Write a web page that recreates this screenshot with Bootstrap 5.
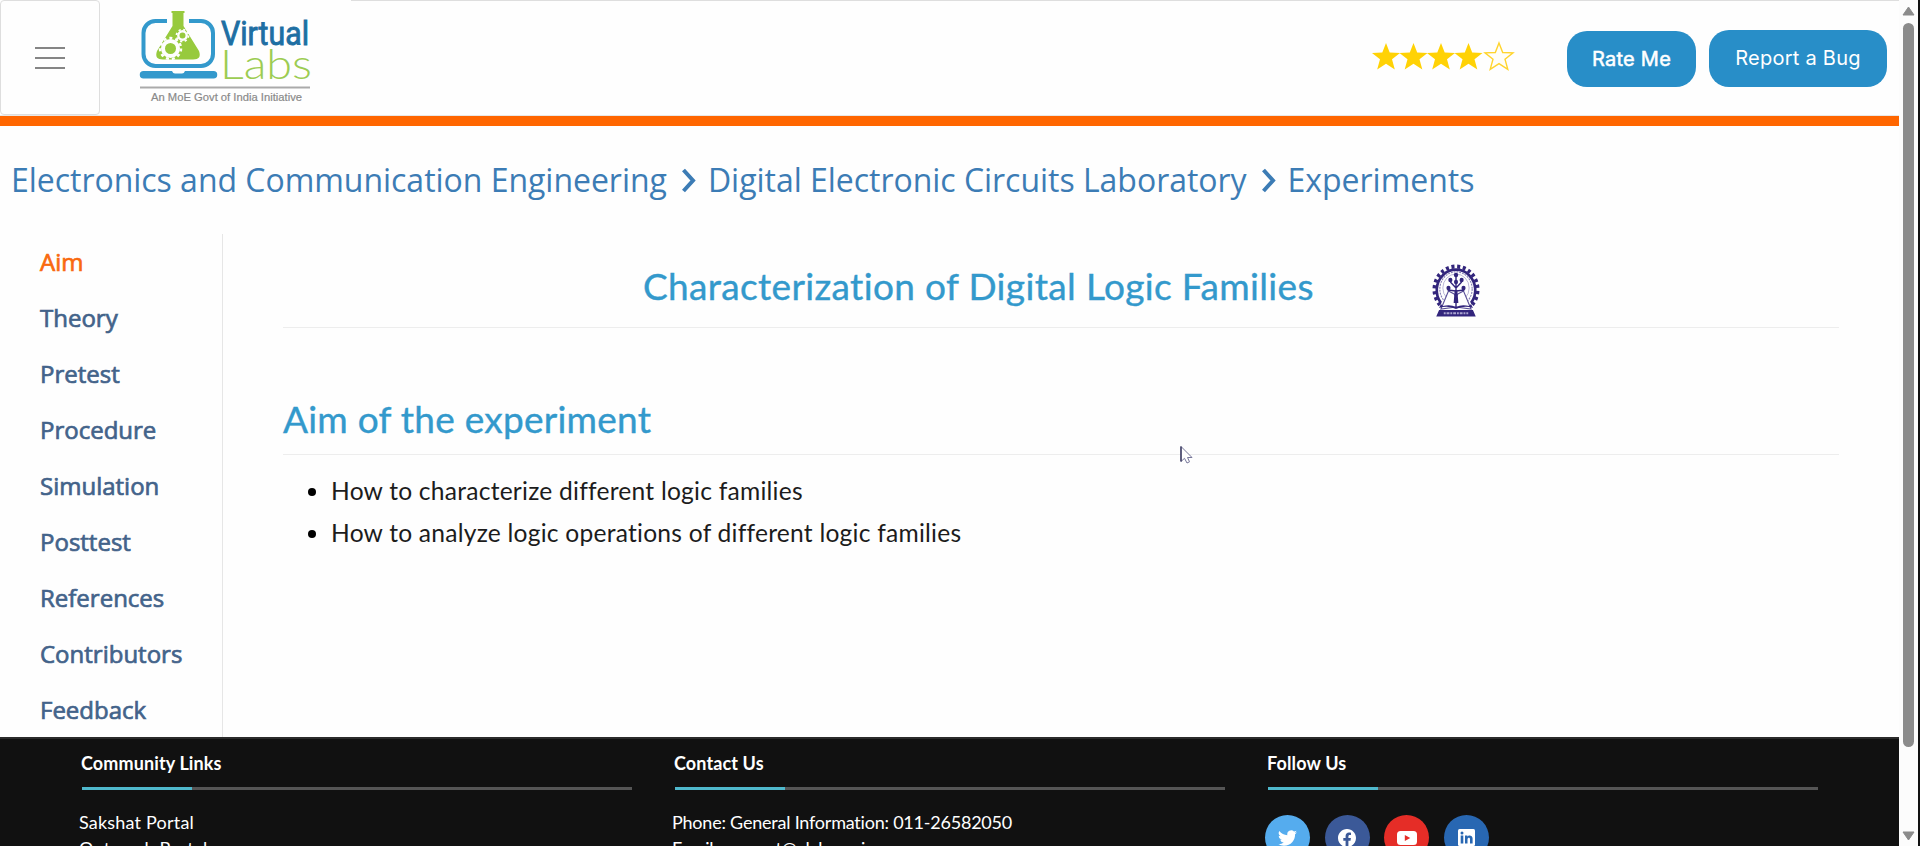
<!DOCTYPE html>
<html lang="en">
<head>
<meta charset="utf-8">
<meta name="viewport" content="width=device-width, initial-scale=1">
<title>Characterization of Digital Logic Families - Virtual Labs</title>
<link href="https://cdn.jsdelivr.net/npm/bootstrap@5.3.0/dist/css/bootstrap.min.css" rel="stylesheet">
<script src="https://cdn.jsdelivr.net/npm/bootstrap@5.3.0/dist/js/bootstrap.bundle.min.js"></script>
<style>
html,body{height:100%;overflow:hidden}
body{background:#fefefe;color:#1c1c1c;font-family:Lato,"Liberation Sans",sans-serif}
.app{height:846px}
.page-main{width:1899px;overflow:hidden}
.top-bar{height:116px;border-bottom:1px solid #e8e8e8}
.menu-btn{width:100px;height:115px;border:1px solid #dedede;border-radius:4px;background:none}
.brand-area{width:251px;padding:8px 0 0 38px}
.top-right{border-top:1px solid #dedede;padding-right:12px}
.stars{margin:0 52px 3px 0}
.pill{background:#288ec8;color:#fff;border-radius:20px;height:57px;font:400 20px/1 Inter,sans-serif;letter-spacing:.25px}
.pill.rate{width:129px;height:56px;margin:1px 13px 0 0;-webkit-text-stroke:.5px #fff}
.pill.bug{width:178px}
.stripe{height:10px;background:#f60}
.crumbs{height:108px;padding:0 0 1px 11px;font:32px/1 "Open Sans",sans-serif;letter-spacing:-.03px;color:#3c7cb5}
.crumbs a{color:inherit;text-decoration:none;white-space:nowrap}
.crumbs svg{width:16px;height:27px;margin:1px 11px 0 14px}
.mid{height:503px}
.side-col{width:223px;border-right:1px solid #e6e6e6}
.side-col a{font:24px/56px "Open Sans",sans-serif;color:#43638a;-webkit-text-stroke:.7px;text-decoration:none;padding-left:40px;height:56px}
.side-col a.on{color:#f9690e}
.content{padding:0 60px}
.ttl{font-size:37px;line-height:40px;letter-spacing:.35px;color:#39c;font-weight:400;-webkit-text-stroke:.4px;margin:0;white-space:nowrap}
.section-row .ttl{letter-spacing:.25px}
.title-row{height:94px;border-bottom:1px solid #ededed;padding:10px 0 0 360px}
.crest{margin:6px 0 0 117px}
.section-row{height:127px;border-bottom:1px solid #ededed;padding-top:71px}
.aims{font-size:24.6px;line-height:42px;letter-spacing:.23px;padding-left:48px;margin:15px 0 0}
.aims li::marker{color:#000}
.site-foot{background:#111;height:109px;border-top:2px solid #2b2b2b;color:#fff;padding-left:82px;overflow:hidden}
.foot-col{width:593px}
.foot-col h2{font-size:18px;line-height:22px;font-weight:700;letter-spacing:.12px;margin:13px 0 13px -1px}
.bar{width:550px;height:3px;background:linear-gradient(90deg,#4fb8cc 20%,#555 20%)}
.foot-col ul{font-size:18px;line-height:26px;margin:19px 0 0 -3px;letter-spacing:.2px}
.foot-col ul.tel{letter-spacing:-.22px}
.social{margin:25px 0 0 -3px;gap:14.600px}
.social a{width:45px;height:45px;border-radius:50%;color:#fff}
.scroller{width:21px;background:#fcfcfc;border-right:2px solid #111;padding:6px 0 5px}
.thumb{width:11px;height:724px;border-radius:6px;background:#8b8b8b;margin-top:7px}
.pointer{position:absolute;left:1180px;top:445px}
</style>
</head>
<body>
<div class="app d-flex">
<div class="page-main d-flex flex-column">
  <header>
    <div class="top-bar d-flex">
      <button class="menu-btn d-flex align-items-center justify-content-center p-0" aria-label="Menu">
        <svg width="30" height="24" viewBox="0 0 30 24" stroke="#858585" stroke-width="2.2"><path d="M0 2h30M0 12h30M0 22h30"/></svg>
      </button>
      <div class="brand-area">
        <svg width="174" height="98" viewBox="138 8 174 98">
          <rect x="143.500" y="21" width="69.500" height="45" rx="12" fill="none" stroke="#3399cc" stroke-width="4"/>
          <path d="M167 17h22v10h-22z" fill="#fefefe"/>
          <path d="M171.500 11h13v2h-1v13l15.500 25q3 8.500-6 8.500h-30q-9 0-6-8.500l15.500-25V13h-1z" fill="#97ca3d"/>
          <g fill="none" stroke="#fefefe"><circle cx="170.500" cy="48.500" r="7.500" stroke-width="4"/><circle cx="170.500" cy="48.500" r="10.500" stroke-width="2.500" stroke-dasharray="3 3"/>
          <circle cx="182.500" cy="35.500" r="4.200" stroke-width="2.400"/><circle cx="182.500" cy="35.500" r="6" stroke-width="1.800" stroke-dasharray="2.200 2.510"/></g>
          <path d="M143.500 71H172q1 2.500 3 2.500h7q2 0 3-2.500h28.500a3.500 3.500 0 0 1 0 7.500h-70a3.500 3.500 0 0 1 0-7.500z" fill="#3399cc"/>
          <text x="221" y="45" font-family="Roboto,sans-serif" font-size="32.500" fill="#1e6fa3" stroke="#1e6fa3" stroke-width=".9" textLength="88" lengthAdjust="spacingAndGlyphs">Virtual</text>
          <text x="220" y="79" font-family="Lato,sans-serif" font-weight="300" font-size="41" fill="#9ccc52" textLength="92" lengthAdjust="spacingAndGlyphs">Labs</text>
          <path d="M140 87.500h170" stroke="#aaa" stroke-width="1.800"/>
          <text x="151" y="101" font-family="Liberation Sans,sans-serif" font-size="11.500" fill="#8a8a8a" stroke="#8a8a8a" stroke-width=".2" textLength="151" lengthAdjust="spacingAndGlyphs">An MoE Govt of India Initiative</text>
        </svg>
      </div>
      <div class="top-right flex-grow-1 d-flex align-items-center justify-content-end">
        <svg class="stars" width="144" height="32" viewBox="0 0 144 32">
          <defs><path id="st" d="M14 1l3.700 9.500 10.300.4-8 6.400 2.800 10.100L14 21.700l-8.800 5.700L8 17.300 0 10.900l10.300-.4z"/></defs>
          <g fill="#ffd205"><use href="#st" x="1" y="1"/><use href="#st" x="28.500" y="1"/><use href="#st" x="56" y="1"/><use href="#st" x="83.500" y="1"/></g>
          <use href="#st" x="114" y="1" fill="#fffef8" stroke="#ffd42e" stroke-width="1.400"/>
        </svg>
        <button class="btn pill rate p-0">Rate Me</button>
        <button class="btn pill bug p-0">Report a Bug</button>
      </div>
    </div>
    <div class="stripe"></div>
  </header>
  <nav class="crumbs d-flex align-items-center">
    <a href="#">Electronics and Communication Engineering</a>
    <svg viewBox="0 0 16 27" fill="none" stroke="#3c7cb5" stroke-width="4"><path d="M2.500 3l9.500 10.500L2.500 24"/></svg>
    <a href="#">Digital Electronic Circuits Laboratory</a>
    <svg viewBox="0 0 16 27" fill="none" stroke="#3c7cb5" stroke-width="4"><path d="M2.500 3l9.500 10.500L2.500 24"/></svg>
    <a href="#">Experiments</a>
  </nav>
  <div class="mid d-flex">
    <nav class="side-col d-flex flex-column flex-shrink-0">
      <a class="on" href="#">Aim</a><a href="#">Theory</a><a href="#">Pretest</a><a href="#">Procedure</a><a href="#">Simulation</a><a href="#">Posttest</a><a href="#">References</a><a href="#">Contributors</a><a href="#">Feedback</a>
    </nav>
    <main class="content flex-grow-1">
      <div class="title-row d-flex align-items-center">
        <h1 class="ttl">Characterization of Digital Logic Families</h1>
        <svg class="crest" width="50" height="56" viewBox="0 0 50 56">
          <g transform="translate(25 0) scale(.94 1) translate(-25 0)">
          <g fill="none" stroke="#32257c"><path d="M9 42A20.500 20.500 0 1 1 41 42" stroke-width="2.800"/><path d="M8 44A23 23 0 1 1 42 44" stroke-width="4" stroke-dasharray="3.200 2.800"/>
          <circle cx="25" cy="28" r="17.200" stroke-width="1.200" stroke-dasharray="2 1" stroke="#8880b8"/>
          <circle cx="25" cy="27" r="14" stroke-width=".7" stroke="#9c96c4"/></g>
          <path d="M17 30l-8 18 16-2 16 2-8-18-6 3-2 3-2-3z" fill="#fff" stroke="#5a5096" stroke-width="1.200"/>
          <path d="M25 15v31M25 27l-6-6M25 27l6-6M25 30l-9-1M25 30l9-1" stroke="#32257c" stroke-width="1.500"/>
          <g fill="#32257c"><circle cx="25" cy="14" r="2.300"/><circle cx="19" cy="19" r="2.200"/><circle cx="31" cy="19" r="2.200"/><circle cx="17" cy="27" r="2.200"/><circle cx="33" cy="27" r="2.200"/><circle cx="25" cy="21" r="2.200"/>
          <path d="M23.500 30h3l1 12h-5zM7 49l-3 6.500h42L43 49zM9 43l-2 4q9-3 18 1 9-4 18-1l-2-4-2 2q-8-2-14 1-6-3-14-1z"/></g>
          <path d="M12 52.300h26" stroke="#aaa4d0" stroke-width="2" stroke-dasharray="2 1 3 1"/>
          </g>
        </svg>
      </div>
      <div class="section-row"><h2 class="ttl">Aim of the experiment</h2></div>
      <ul class="aims">
        <li>How to characterize different logic families</li>
        <li>How to analyze logic operations of different logic families</li>
      </ul>
    </main>
  </div>
  <footer class="site-foot d-flex">
    <div class="foot-col">
      <h2>Community Links</h2><div class="bar"></div>
      <ul class="list-unstyled"><li>Sakshat Portal</li><li>Outreach Portal</li></ul>
    </div>
    <div class="foot-col">
      <h2>Contact Us</h2><div class="bar"></div>
      <ul class="list-unstyled tel"><li>Phone: General Information: 011-26582050</li><li>Email: support@vlabs.ac.in</li></ul>
    </div>
    <div class="foot-col">
      <h2>Follow Us</h2><div class="bar"></div>
      <div class="social d-flex">
        <a class="d-flex align-items-center justify-content-center" style="background:#55acee" href="#" aria-label="Twitter"><svg width="19" height="19" viewBox="0 0 16 16" fill="currentColor"><path d="M5.026 15c6.038 0 9.341-5.003 9.341-9.334 0-.14 0-.282-.006-.422A6.685 6.685 0 0 0 16 3.542a6.658 6.658 0 0 1-1.889.518 3.301 3.301 0 0 0 1.447-1.817 6.533 6.533 0 0 1-2.087.793A3.286 3.286 0 0 0 7.875 6.030a9.325 9.325 0 0 1-6.767-3.429 3.289 3.289 0 0 0 1.018 4.382A3.323 3.323 0 0 1 .64 6.575v.045a3.288 3.288 0 0 0 2.632 3.218 3.203 3.203 0 0 1-.865.115 3.230 3.230 0 0 1-.614-.057 3.283 3.283 0 0 0 3.067 2.277A6.600 6.600 0 0 1 .78 13.580a6.320 6.320 0 0 1-.78-.045A9.344 9.344 0 0 0 5.026 15z"/></svg></a>
        <a class="d-flex align-items-center justify-content-center" style="background:#3b5998" href="#" aria-label="Facebook"><svg width="18" height="18" viewBox="0 0 16 16" fill="currentColor"><path d="M16 8.049c0-4.446-3.582-8.050-8-8.050C3.580 0-.002 3.603-.002 8.050c0 4.017 2.926 7.347 6.750 7.951v-5.625h-2.030V8.050H6.750V6.275c0-2.017 1.195-3.131 3.022-3.131.876 0 1.791.157 1.791.157v1.980h-1.009c-.993 0-1.303.621-1.303 1.258v1.510h2.218l-.354 2.326H9.250V16c3.824-.604 6.750-3.934 6.750-7.951z"/></svg></a>
        <a class="d-flex align-items-center justify-content-center" style="background:#e52d27" href="#" aria-label="YouTube"><svg width="20" height="14" viewBox="0 0 20 14"><rect width="20" height="14" rx="3.500" fill="#fff"/><path d="M7.800 4l5.500 3-5.500 3z" fill="#e52d27"/></svg></a>
        <a class="d-flex align-items-center justify-content-center" style="background:#2867b2" href="#" aria-label="LinkedIn"><svg width="17" height="17" viewBox="0 0 17 17"><rect width="17" height="17" rx="1.500" fill="#fff"/><g fill="#2867b2"><circle cx="4" cy="4" r="1.500"/><path d="M2.700 6.500h2.600v8H2.700zM7 6.500h2.400v1.100c1-1.900 5.200-1.800 5.200 2v4.900H12V10.200c0-2.200-2.500-1.900-2.500 0v4.300H7z"/></g></svg></a>
      </div>
    </div>
  </footer>
</div>
<div class="scroller d-flex flex-column align-items-center">
  <svg class="flex-shrink-0" width="13" height="10" viewBox="0 0 13 10"><path d="M6.500 1L12 9H1z" fill="#8b8b8b" stroke="#8b8b8b" stroke-linejoin="round"/></svg>
  <div class="thumb flex-shrink-0"></div>
  <svg class="flex-shrink-0 mt-auto" width="13" height="10" viewBox="0 0 13 10"><path d="M6.500 9L12 1H1z" fill="#8b8b8b" stroke="#8b8b8b" stroke-linejoin="round"/></svg>
</div>
</div>
<svg class="pointer" width="14" height="20" viewBox="0 0 14 20"><path d="M1 1.500v15l3.500-3.200L7 18l2.500-1.200-2-4.300H12z" fill="#fff" stroke="#77779a" stroke-width="1"/><path d="M1 1.500v15" stroke="#22224a" stroke-width="1.200"/></svg>
</body>
</html>
